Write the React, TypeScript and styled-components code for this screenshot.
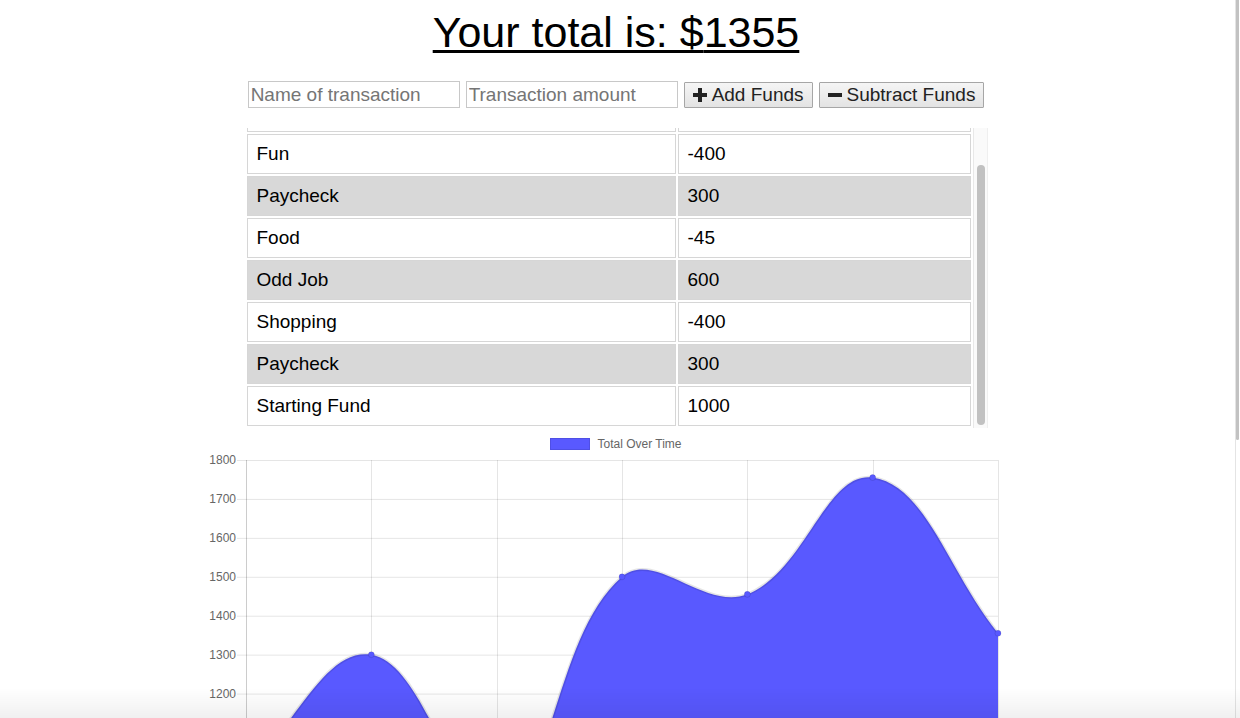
import React, { useEffect, useRef } from "react"
import styled, { createGlobalStyle } from "styled-components"

const GlobalStyle = createGlobalStyle`
  html, body {
    margin: 0;
    padding: 0;
    overflow: hidden;
    background: #fff;
  }
  body {
    font-family: "Liberation Sans", Arial, sans-serif;
  }
  * {
    box-sizing: border-box;
  }
`

const blue = "#5959ff"

type Transaction = { name: string; value: number }

// newest first, like the list shows them
const transactions: Transaction[] = [
  { name: "Fun", value: -400 },
  { name: "Paycheck", value: 300 },
  { name: "Food", value: -45 },
  { name: "Odd Job", value: 600 },
  { name: "Shopping", value: -400 },
  { name: "Paycheck", value: 300 },
  { name: "Starting Fund", value: 1000 }
]

const Page = styled.div`
  display: flex;
  height: 100vh;
  overflow: hidden;
`

const Main = styled.main`
  flex: 1;
  min-width: 0;
  overflow: hidden;
`

const Title = styled.h1`
  margin: 7px 0 0;
  font-size: 43px;
  line-height: 50px;
  font-weight: 400;
  text-align: center;
  color: #000;
  text-decoration: underline;
  text-decoration-thickness: 3px;
  text-underline-offset: 3px;
`

const EntryForm = styled.form`
  display: flex;
  justify-content: center;
  align-items: center;
  gap: 6px;
  margin-top: 24px;
  height: 27px;
`

const Field = styled.input`
  width: 212px;
  height: 27px;
  border: 1px solid #c8c8c8;
  padding: 0 2px;
  font-family: inherit;
  font-size: 19px;
  color: #000;
  outline: none;

  &::placeholder {
    color: #757575;
  }
`

const FundButton = styled.button`
  display: inline-flex;
  align-items: center;
  gap: 5px;
  height: 26px;
  padding: 0 8px;
  border: 1px solid #a6a6a6;
  border-radius: 1px;
  background: linear-gradient(#f5f5f5, #e3e3e3);
  font-family: inherit;
  font-size: 19px;
  color: #222;
  white-space: nowrap;
`

const TableFrame = styled.div`
  display: flex;
  width: 743px;
  height: 300px;
  margin: 20px auto 0;
`

const TableScroller = styled.div`
  flex: 1;
  min-width: 0;
  overflow: hidden;
`

const ScrollTrack = styled.div`
  width: 15px;
  flex: none;
  background: #fafafa;
  border-left: 1px solid #e8e8e8;
  border-right: 1px solid #efefef;
  padding: 37px 2px 3px 3px;
`

const ScrollThumb = styled.div`
  width: 8px;
  height: 260px;
  border-radius: 4px;
  background: #c1c1c1;
`

const TxTable = styled.table`
  width: 100%;
  table-layout: fixed;
  border-collapse: separate;
  border-spacing: 2px;
  font-size: 19px;
  color: #000;
`

const Row = styled.tr<{ $shaded?: boolean }>`
  background: ${(p) => (p.$shaded ? "#d8d8d8" : "#fff")};
`

const Cell = styled.td<{ $wide?: boolean }>`
  width: ${(p) => (p.$wide ? "429px" : "auto")};
  height: 40px;
  padding: 0 9px;
  border: 1px solid #d6d6d6;
  text-align: left;
  vertical-align: middle;
  font-weight: 400;
`

const HeadCell = styled(Cell).attrs({ as: "th" })``

const Legend = styled.div`
  display: flex;
  justify-content: center;
  align-items: center;
  gap: 7px;
  margin-top: 9px;
  height: 13px;
`

const LegendSwatch = styled.span`
  width: 40px;
  height: 12px;
  background: ${blue};
  border: 1px solid rgba(0, 0, 0, 0.1);
`

const LegendLabel = styled.span`
  font-size: 12px;
  line-height: 12px;
  color: #666;
  padding-top: 1px;
`

const ChartSvg = styled.svg`
  display: block;
  margin: 2px auto 0;
  overflow: visible;
`

const ScrollRail = styled.div`
  width: 8px;
  flex: none;
  padding-left: 3px;
  display: flex;
`

const RailTrack = styled.div`
  flex: 1;
  border-left: 1px solid #e4e4e4;
  padding-right: 1px;
`

const RailThumb = styled.div`
  height: 440px;
  background: #c2c2c2;
  border-radius: 0 0 2px 2px;
`

const BottomShade = styled.div`
  position: fixed;
  left: 0;
  right: 0;
  bottom: 0;
  height: 30px;
  pointer-events: none;
  background: linear-gradient(rgba(0, 0, 0, 0), rgba(0, 0, 0, 0.06));
`

const PlusIcon = () => (
  <svg width="14" height="14" viewBox="0 0 14 14">
    <path d="M5 0h4v5h5v4H9v5H5V9H0V5h5z" fill="#222" />
  </svg>
)

const MinusIcon = () => (
  <svg width="14" height="14" viewBox="0 0 14 14">
    <rect x="0" y="5" width="14" height="4" fill="#222" />
  </svg>
)

type Pt = { x: number; y: number }

// same spline as chart.js 2 (tension 0.4)
function controlPoints(prev: Pt, cur: Pt, next: Pt, t: number) {
  const d01 = Math.hypot(cur.x - prev.x, cur.y - prev.y)
  const d12 = Math.hypot(next.x - cur.x, next.y - cur.y)
  let s01 = d01 / (d01 + d12)
  let s12 = d12 / (d01 + d12)
  if (isNaN(s01)) s01 = 0
  if (isNaN(s12)) s12 = 0
  const fa = t * s01
  const fb = t * s12
  return {
    before: { x: cur.x - fa * (next.x - prev.x), y: cur.y - fa * (next.y - prev.y) },
    after: { x: cur.x + fb * (next.x - prev.x), y: cur.y + fb * (next.y - prev.y) }
  }
}

const Chart = (props: { values: number[] }) => {
  const { values } = props
  const width = 832
  const height = 400
  const left = 46
  const right = 798
  const top = 8
  const max = 1800
  const min = 900
  const perUnit = 38.93 / 100
  const bottom = top + (max - min) * perUnit
  const step = (right - left) / (values.length - 1)
  const yOf = (v: number) => top + (max - v) * perUnit

  const pts = values.map((v, i) => ({ x: left + i * step, y: yOf(v) }))
  const cps = pts.map((p, i) =>
    controlPoints(pts[Math.max(0, i - 1)], p, pts[Math.min(pts.length - 1, i + 1)], 0.4)
  )
  const clampY = (y: number) => Math.min(bottom, Math.max(top, y))
  let line = `M${pts[0].x},${pts[0].y}`
  for (let i = 1; i < pts.length; i++) {
    const a = cps[i - 1].after
    const b = cps[i].before
    line += ` C${a.x},${clampY(a.y)} ${b.x},${clampY(b.y)} ${pts[i].x},${pts[i].y}`
  }
  const area = `${line} L${right},${bottom} L${left},${bottom} Z`

  const ticks: number[] = []
  for (let v = max; v >= min; v -= 100) ticks.push(v)

  return (
    <ChartSvg width={width} height={height} viewBox={`0 0 ${width} ${height}`}>
      {ticks.map((v) => (
        <g key={v}>
          <line x1={37} x2={right} y1={yOf(v) + 0.5} y2={yOf(v) + 0.5} stroke="rgba(0,0,0,0.1)" />
          <text
            x={36}
            y={yOf(v) + 4}
            textAnchor="end"
            fontSize="12"
            fill="#666"
            fontFamily="Liberation Sans, Arial, sans-serif"
          >
            {v}
          </text>
        </g>
      ))}
      {pts.map((p, i) => (
        <line
          key={i}
          x1={Math.round(p.x) + 0.5}
          x2={Math.round(p.x) + 0.5}
          y1={top}
          y2={bottom + 10}
          stroke={i === 0 ? "rgba(0,0,0,0.2)" : "rgba(0,0,0,0.1)"}
        />
      ))}
      <path d={area} fill={blue} />
      <path d={line} fill="none" stroke="rgba(0,0,0,0.1)" strokeWidth={3} />
      {pts.map((p, i) => (
        <circle key={i} cx={p.x} cy={p.y} r={3} fill={blue} stroke="rgba(0,0,0,0.1)" />
      ))}
    </ChartSvg>
  )
}

const App = () => {
  const scrollerRef = useRef<HTMLDivElement>(null)

  useEffect(() => {
    const el = scrollerRef.current
    if (el) el.scrollTop = el.scrollHeight
  }, [])

  const total = transactions.reduce((sum, t) => sum + t.value, 0)
  const running: number[] = []
  transactions
    .slice()
    .reverse()
    .reduce((sum, t) => {
      running.push(sum + t.value)
      return sum + t.value
    }, 0)

  return (
    <Page>
      <GlobalStyle />
      <Main>
        <Title>Your total is: ${total}</Title>
        <EntryForm onSubmit={(e) => e.preventDefault()}>
          <Field type="text" placeholder="Name of transaction" />
          <Field type="number" placeholder="Transaction amount" />
          <FundButton type="button">
            <PlusIcon />
            Add Funds
          </FundButton>
          <FundButton type="button">
            <MinusIcon />
            Subtract Funds
          </FundButton>
        </EntryForm>
        <TableFrame>
          <TableScroller ref={scrollerRef}>
            <TxTable>
              <thead>
                <Row>
                  <HeadCell $wide>Transaction</HeadCell>
                  <HeadCell>Amount</HeadCell>
                </Row>
              </thead>
              <tbody>
                {transactions.map((t, i) => (
                  <Row key={i} $shaded={i % 2 === 1}>
                    <Cell $wide>{t.name}</Cell>
                    <Cell>{t.value}</Cell>
                  </Row>
                ))}
              </tbody>
            </TxTable>
          </TableScroller>
          <ScrollTrack>
            <ScrollThumb />
          </ScrollTrack>
        </TableFrame>
        <Legend>
          <LegendSwatch />
          <LegendLabel>Total Over Time</LegendLabel>
        </Legend>
        <Chart values={running} />
      </Main>
      <ScrollRail>
        <RailTrack>
          <RailThumb />
        </RailTrack>
      </ScrollRail>
      <BottomShade />
    </Page>
  )
}

export default App
